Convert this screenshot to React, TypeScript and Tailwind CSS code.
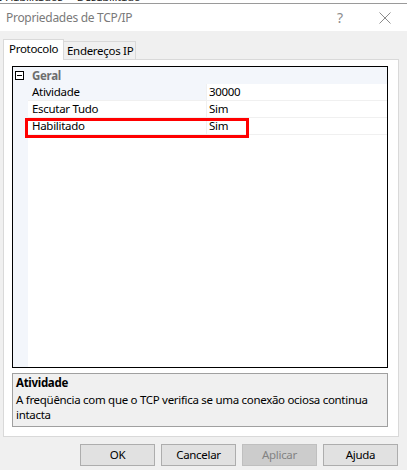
export default function App() {
  const rows = [
    { name: "Atividade", value: "30000", selected: true },
    { name: "Escutar Tudo", value: "Sim", selected: false },
    { name: "Habilitado", value: "Sim", selected: false },
  ]

  return (
    <div className="w-[407px] h-[470px] bg-[#f0f0f0] overflow-hidden font-['Noto_Sans',sans-serif] text-[11.5px] tracking-[-0.3px] text-black leading-none">
      {/* bit of the window behind */}
      <div className="h-[3px] bg-white overflow-hidden">
        <div className="-mt-[10px] flex gap-[14px] text-[#222] leading-[14px] whitespace-nowrap">
          <span className="-ml-[4px]">e Habilitados</span>
          <span>Desabilitado</span>
        </div>
      </div>
      <div className="h-px bg-[#9a9a9a]" />

      {/* title bar */}
      <div className="h-[27px] bg-white flex items-center pl-[6px] text-[#7a7a7a]">
        <span className="text-[12px]">Propriedades de TCP/IP</span>
        <span className="ml-auto text-[14px] text-[#8c8c8c] w-[12px] text-center">?</span>
        <svg className="ml-[33px] mr-[16px]" width="12" height="12" viewBox="0 0 12 12">
          <path d="M0.5 0.5 L11.5 11.5 M11.5 0.5 L0.5 11.5" stroke="#8c8c8c" strokeWidth="1" />
        </svg>
      </div>

      <div className="pt-[8px] pl-[3px]">
        {/* tabs */}
        <div className="flex items-end h-[20px]">
          <div className="relative z-10 w-[61px] h-[21px] -mb-px bg-white border border-b-0 border-[#d9d9d9] flex items-center pl-[5px] pb-[2px] whitespace-nowrap">
            Protocolo
          </div>
          <div className="w-[72px] h-[18px] bg-[#f0f0f0] border border-l-0 border-b-0 border-[#d9d9d9] flex items-center pl-[3px] whitespace-nowrap">
            Endereços IP
          </div>
        </div>

        {/* panel */}
        <div className="w-[396px] h-[378px] bg-white border border-[#d9d9d9] pl-[8px] pt-[6px]">
          {/* property grid */}
          <div className="relative w-[376px] h-[302px] border border-black bg-white flex">
            <div className="w-[15px] bg-[#f3f6fb]" />
            <div className="flex-1 flex flex-col">
              <div className="h-[17px] bg-[#f3f6fb] flex items-center pl-[4px] pt-[1px] text-[#6d6d6d] font-bold">
                Geral
              </div>
              {rows.map((r) => (
                <div key={r.name} className="h-[17px] flex border-b border-[#f0f0f0]">
                  <div className={`w-[179px] border-r border-[#f0f0f0] flex items-center pl-[4px] ${r.selected ? "bg-[#f3f6fb]" : "bg-white"}`}>
                    {r.name}
                  </div>
                  <div className="flex-1 flex items-center pl-[2px]">{r.value}</div>
                </div>
              ))}
            </div>
            {/* minus box */}
            <div className="absolute left-[2px] top-[4px] w-[9px] h-[9px] border border-black bg-white flex items-center justify-center">
              <div className="w-[5px] h-px bg-black" />
            </div>
            {/* red highlight */}
            <div className="absolute left-[12px] top-[51px] w-[224px] h-[20px] border-[3px] border-[#ff0000]" />
          </div>

          {/* description */}
          <div className="mt-[5px] w-[376px] h-[54px] bg-[#f0f0f0] border border-[#a0a0a0] pl-[3px] pt-[1px]">
            <div className="font-bold h-[16px] flex items-center">Atividade</div>
            <div className="mt-[1px] leading-[15px] pr-[10px]">
              A freqüência com que o TCP verifica se uma conexão ociosa continua intacta
            </div>
          </div>
        </div>

        {/* buttons */}
        <div className="flex justify-end gap-[6px] pr-[9px] pt-[7px]">
          {["OK", "Cancelar", "Aplicar", "Ajuda"].map((b) => (
            <div
              key={b}
              className={`w-[75px] h-[22px] border flex items-center justify-center ${
                b === "Aplicar"
                  ? "bg-[#cccccc] border-[#bfbfbf] text-[#838383]"
                  : "bg-[#e1e1e1] border-[#adadad] text-black"
              }`}
            >
              {b}
            </div>
          ))}
        </div>
      </div>
    </div>
  )
}
